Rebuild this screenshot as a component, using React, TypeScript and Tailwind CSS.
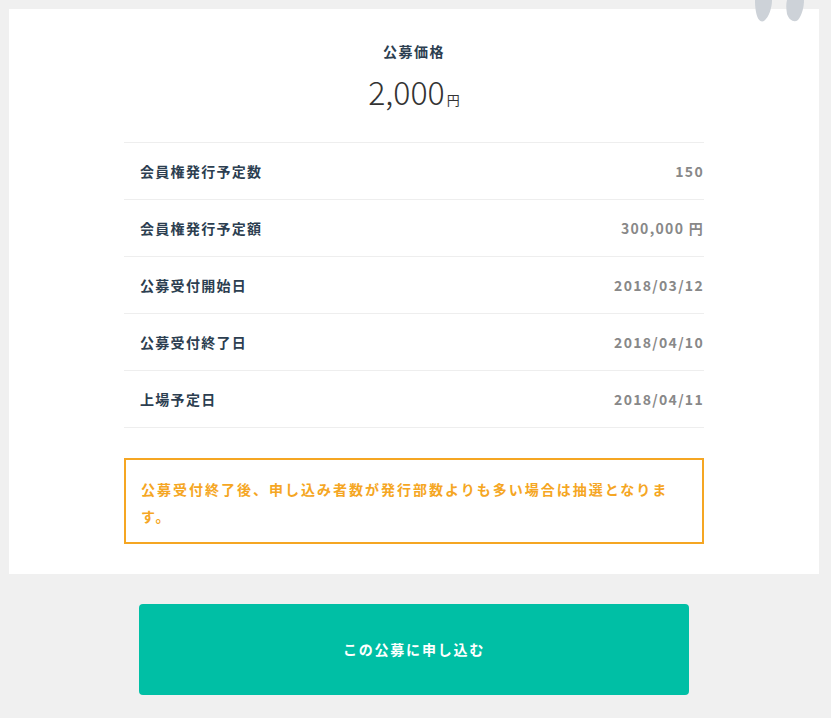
const ROWS = [
  { label: '会員権発行予定数', value: '150' },
  { label: '会員権発行予定額', value: '300,000 円' },
  { label: '公募受付開始日', value: '2018/03/12' },
  { label: '公募受付終了日', value: '2018/04/10' },
  { label: '上場予定日', value: '2018/04/11' },
]

const jp = "font-['Noto_Sans_CJK_JP','Noto_Sans',sans-serif]"

function Ears() {
  return (
    <svg
      className="absolute left-[752px] top-0"
      width="56"
      height="24"
      viewBox="0 0 56 24"
      fill="#cdd2d8"
    >
      <path d="M3 0 L20 0 C20 8 17 17 12 21 C8 23 5 18 4 12 C3 7 3 3 3 0 Z" />
      <path d="M35 0 L52 0 C52 7 50 15 46 20 C42 23 37 20 35 14 C34 8 34 4 35 0 Z" />
    </svg>
  )
}

export default function App() {
  return (
    <div className={`relative min-h-[718px] w-[831px] bg-[#f0f0f0] pt-[9px] ${jp}`}>
      <div className="ml-[9px] w-[810px] bg-white pb-[30px] pt-[26px]">
        <div className="mx-auto w-[580px]">
          <h2 className="text-center text-[14px] font-bold leading-[32px] tracking-[1.5px] text-[#2c3e50]">
            公募価格
          </h2>
          <div className="mt-[4px] flex items-baseline justify-center text-[#333]">
            <span className="text-[32px] font-light leading-[40px]">2,000</span>
            <span className="ml-[2px] text-[13px]">円</span>
          </div>

          <div className="mt-[31px] border-t border-[#eeeeee]">
            {ROWS.map((r) => (
              <div
                key={r.label}
                className="flex h-[57px] items-center justify-between border-b border-[#eeeeee] pl-4 text-[14px] font-bold tracking-[1.3px]"
              >
                <span className="text-[#2c3e50]">{r.label}</span>
                <span className="text-[#888888]">{r.value}</span>
              </div>
            ))}
          </div>

          <div className="mt-[30px] border-2 border-[#f5a623] pb-3 pl-[15px] pr-6 pt-4 text-[14px] font-bold leading-[27px] tracking-[2px] text-[#f5a623]">
            公募受付終了後、申し込み者数が発行部数よりも多い場合は抽選となります。
          </div>
        </div>
      </div>

      <div className="pt-[30px]">
        <button
          type="button"
          className="ml-[139px] flex h-[91px] w-[550px] items-center justify-center rounded bg-[#00bfa5] text-[14px] font-bold tracking-[1.8px] text-white"
        >
          この公募に申し込む
        </button>
      </div>

      <Ears />
    </div>
  )
}
